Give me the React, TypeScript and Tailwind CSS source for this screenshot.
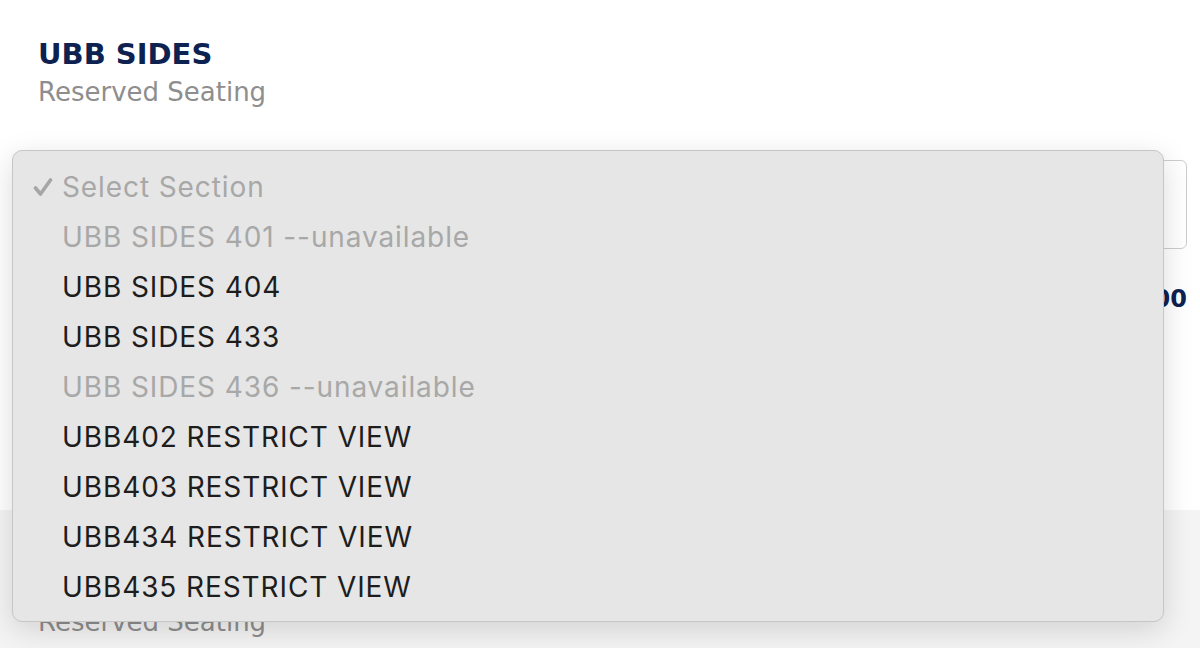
import React from "react";

const options: { label: string; disabled?: boolean; selected?: boolean }[] = [
  { label: "Select Section", disabled: true, selected: true },
  { label: "UBB SIDES 401 --unavailable", disabled: true },
  { label: "UBB SIDES 404" },
  { label: "UBB SIDES 433" },
  { label: "UBB SIDES 436 --unavailable", disabled: true },
  { label: "UBB402 RESTRICT VIEW" },
  { label: "UBB403 RESTRICT VIEW" },
  { label: "UBB434 RESTRICT VIEW" },
  { label: "UBB435 RESTRICT VIEW" },
];

function Check() {
  return (
    <svg width="20" height="20" viewBox="0 0 20 20" className="shrink-0">
      <path d="M2.5 11 L7.5 17 L17.5 3" fill="none" stroke="#a6a6a6" strokeWidth="3.6" strokeLinecap="round" strokeLinejoin="round" />
    </svg>
  );
}

export default function App() {
  return (
    <div className="relative h-[648px] w-[1200px] overflow-hidden bg-white font-['DejaVu_Sans',sans-serif]">
      {/* Upper section */}
      <div className="h-[510px] px-[38px] pt-[36px]">
        <div className="text-[29px] font-bold leading-[36px] text-[#0d2250]">UBB SIDES</div>
        <div className="mt-[4px] text-[26px] font-normal leading-[32px] text-[#8e8e8e]">Reserved Seating</div>
        <div className="mt-[52px] mr-[-25px] h-[89px] rounded-[6px] border border-[#cdcdcd] bg-white" />
        <div className="mt-[36px] mr-[-25px] flex justify-end text-[24px] font-bold leading-[28px] text-[#0d2250]">$150.00</div>
      </div>
      {/* Lower section */}
      <div className="h-[138px] bg-[#f4f4f4] px-[38px] pt-[56px]">
        <div className="text-[29px] font-bold leading-[36px] text-[#0d2250]">UBB CORNERS</div>
        <div className="mt-[4px] text-[26px] font-normal leading-[32px] text-[#8e8e8e]">Reserved Seating</div>
      </div>

      {/* Dropdown overlay */}
      <div className="absolute left-[12px] top-[150px] w-[1152px] rounded-[10px] border border-[#c6c6c6] bg-[#e6e6e6] pt-[11px] pb-[9px] shadow-[0_8px_30px_rgba(0,0,0,0.14)] font-['Inter',sans-serif]">
        {options.map((o) => (
          <div key={o.label} className="flex h-[50px] items-center">
            <div className="flex w-[49px] justify-end pr-[9px]">{o.selected ? <Check /> : null}</div>
            <span className={`text-[28px] tracking-[0.9px] ${o.disabled ? "text-[#a8a8a8]" : "text-[#1d1d1d]"}`}>{o.label}</span>
          </div>
        ))}
      </div>
    </div>
  );
}
